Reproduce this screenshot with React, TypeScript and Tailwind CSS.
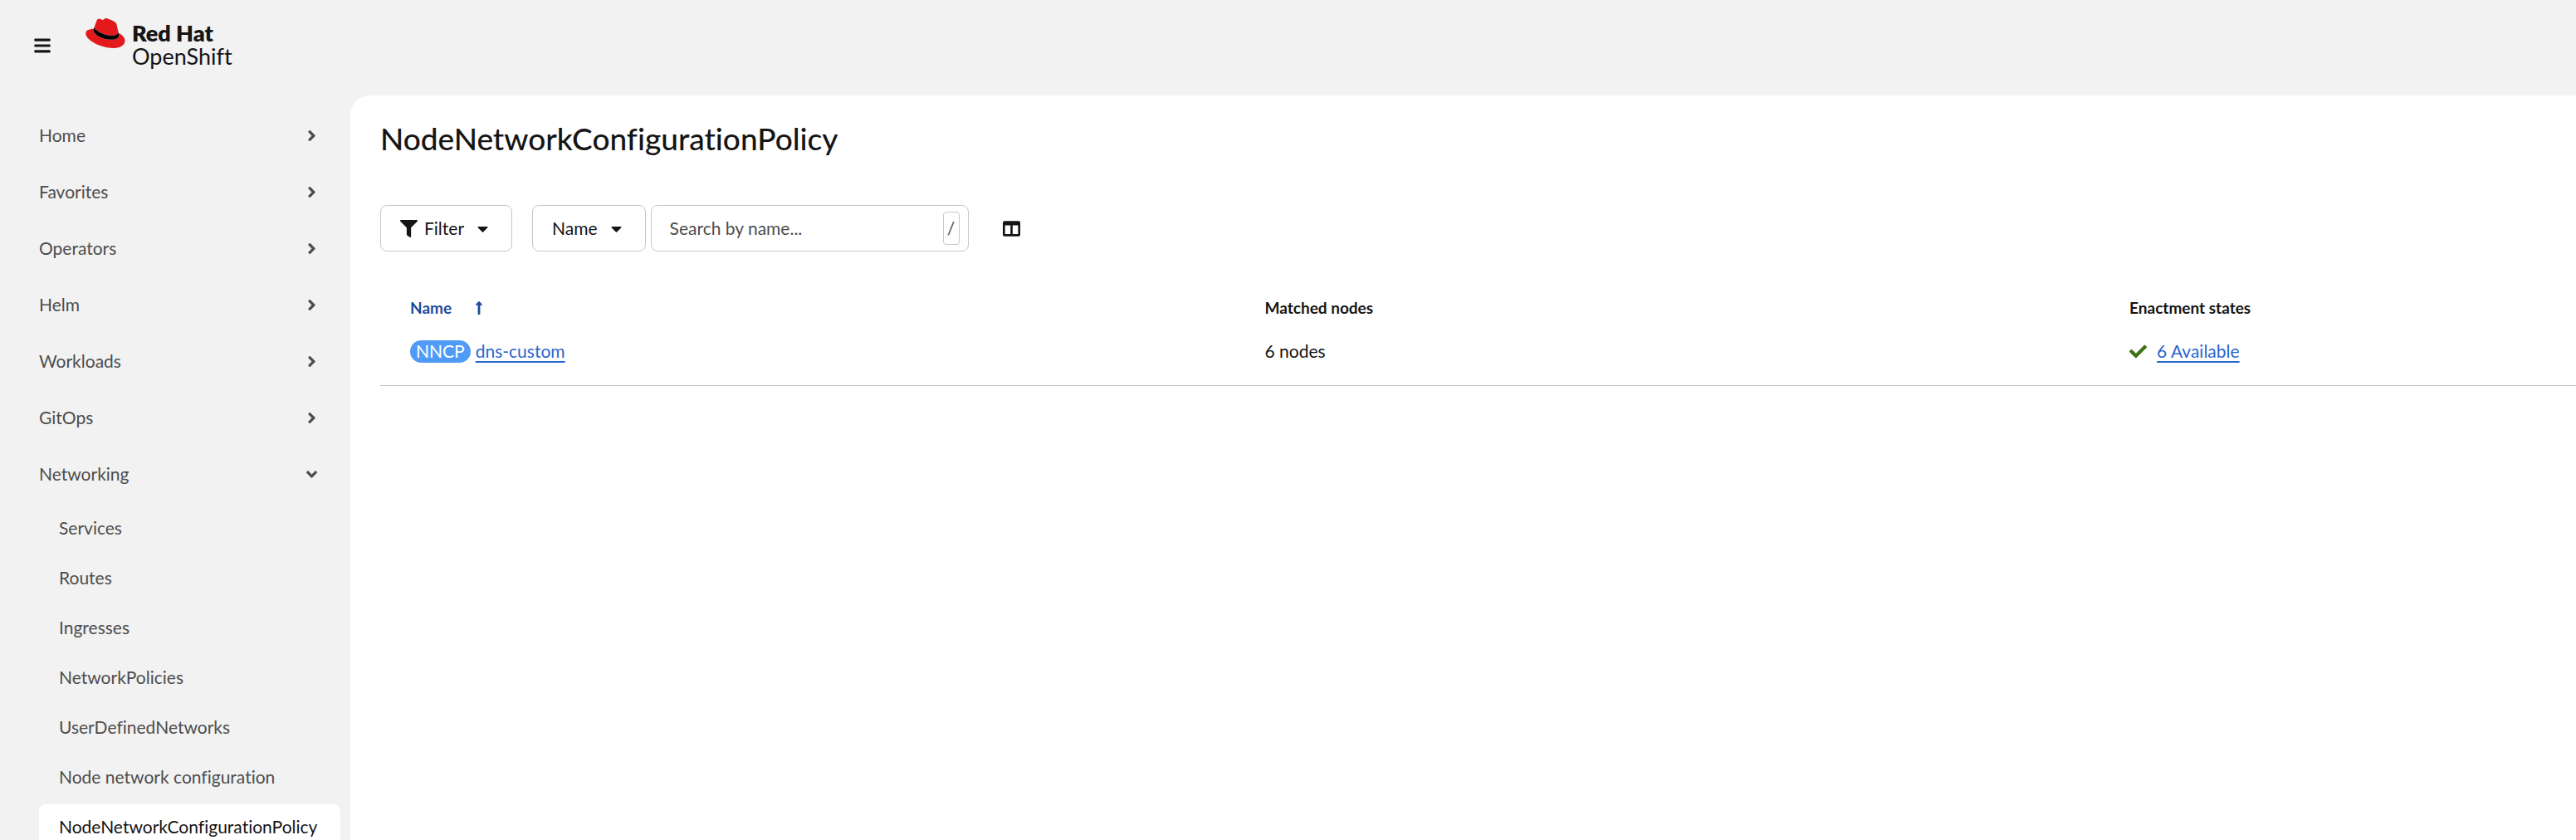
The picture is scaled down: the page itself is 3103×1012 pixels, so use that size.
import {
  FaAngleDown,
  FaAngleRight,
  FaBars,
  FaCaretDown,
  FaCheck,
  FaColumns,
  FaFilter,
  FaLongArrowAltUp,
} from "react-icons/fa";

const sections = ["Home", "Favorites", "Operators", "Helm", "Workloads", "GitOps"];

const networking = [
  "Services",
  "Routes",
  "Ingresses",
  "NetworkPolicies",
  "UserDefinedNetworks",
  "Node network configuration",
  "NodeNetworkConfigurationPolicy",
];

function HatLogo() {
  return (
    <svg viewBox="0 0 192 145" className="h-9 w-12" aria-hidden="true">
      <path
        fill="#e3191d"
        d="M127.47,83.49c12.51,0,30.61-2.58,30.61-17.46a14,14,0,0,0-.31-3.42l-7.45-32.36c-1.72-7.12-3.23-10.35-15.73-16.6C124.89,8.69,103.76.5,97.51.5,91.69.5,90,8,83.06,8c-6.68,0-11.64-5.6-17.89-5.6-6,0-9.91,4.09-12.93,12.5,0,0-8.41,23.72-9.49,27.16A6.43,6.43,0,0,0,42.53,44c0,9.22,36.3,39.45,84.94,39.45M160,72.07c1.73,8.19,1.73,9.05,1.73,10.13,0,14-15.74,21.77-36.43,21.77C78.54,104,37.58,76.6,37.58,58.49a18.45,18.45,0,0,1,1.51-7.33C22.27,52,.5,55,.5,74.22c0,31.48,74.59,70.28,133.65,70.28,45.28,0,56.7-20.48,56.7-36.65,0-12.72-11-27.16-30.83-35.78"
      />
      <path
        fill="#000"
        d="M160,72.07c1.73,8.19,1.73,9.05,1.73,10.13,0,14-15.74,21.77-36.43,21.77C78.54,104,37.58,76.6,37.58,58.49a18.45,18.45,0,0,1,1.51-7.33l3.66-9.06A6.43,6.43,0,0,0,42.53,44c0,9.22,36.3,39.45,84.94,39.45,12.51,0,30.61-2.58,30.61-17.46a14,14,0,0,0-.31-3.42Z"
      />
    </svg>
  );
}

function Masthead() {
  return (
    <header className="flex h-[115px] shrink-0 items-start">
      <button type="button" aria-label="Toggle navigation" className="mt-11 ml-10 flex text-[#151515]">
        <FaBars size={22} />
      </button>
      <a href="#home" className="mt-[22px] ml-[41px] flex text-[#151515]">
        <HatLogo />
        <span className="mt-1 ml-2 flex flex-col text-[27px] leading-7">
          <span className="font-extrabold">Red Hat</span>
          <span>OpenShift</span>
        </span>
      </a>
    </header>
  );
}

function Sidebar() {
  return (
    <nav aria-label="Main" className="w-[422px] shrink-0 overflow-hidden pt-[18px] pr-3 pl-[47px] text-[21px] text-[#4d4d4d]">
      <ul className="flex flex-col gap-2">
        {sections.map((label) => (
          <li key={label}>
            <button type="button" aria-expanded="false" className="flex h-[60px] w-full items-center justify-between pr-6">
              {label}
              <FaAngleRight size={21} />
            </button>
          </li>
        ))}
        <li>
          <button type="button" aria-expanded="true" className="flex h-[60px] w-full items-center justify-between pr-6">
            Networking
            <FaAngleDown size={21} />
          </button>
          <ul className="mt-2 flex flex-col gap-1.5">
            {networking.map((label) => {
              const current = label === "NodeNetworkConfigurationPolicy";
              return (
                <li key={label}>
                  <a
                    href={`#${label}`}
                    aria-current={current ? "page" : undefined}
                    className={
                      current
                        ? "flex h-[54px] items-center rounded-lg bg-white pl-6 text-[#151515]"
                        : "flex h-[54px] items-center pl-6"
                    }
                  >
                    {label}
                  </a>
                </li>
              );
            })}
          </ul>
        </li>
      </ul>
    </nav>
  );
}

function Toolbar() {
  return (
    <div className="flex items-center text-[21px]">
      <button type="button" className="flex h-14 items-center rounded-lg border border-[#c7c7c7] pr-6 pl-[23px]">
        <FaFilter size={21} />
        <span className="ml-2">Filter</span>
        <FaCaretDown size={21} className="ml-3" />
      </button>
      <button type="button" className="ml-6 flex h-14 items-center rounded-lg border border-[#c7c7c7] pr-6 pl-[23px]">
        Name
        <FaCaretDown size={21} className="ml-3" />
      </button>
      <div className="ml-1.5 flex h-14 w-[383px] items-center rounded-lg border border-[#c7c7c7] pr-2.5 pl-[22px]">
        <input
          type="text"
          aria-label="Search by name"
          placeholder="Search by name..."
          className="min-w-0 flex-1 bg-transparent outline-none placeholder:text-[#4d4d4d]"
        />
        <kbd className="flex h-10 w-5 items-center justify-center rounded-sm border border-[#c7c7c7] font-[Lato] text-[#4d4d4d]">
          /
        </kbd>
      </div>
      <button type="button" aria-label="Manage columns" className="ml-[41px] flex">
        <FaColumns size={21} />
      </button>
    </div>
  );
}

function PolicyTable() {
  return (
    <table className="mt-[38px] w-full table-fixed border-collapse text-left">
      <thead className="text-[19px] leading-6">
        <tr>
          <th scope="col" aria-sort="ascending" className="h-[60px] w-[39%] pl-9 font-bold text-[#1f4b99]">
            <button type="button" className="flex items-center gap-6 font-bold">
              Name
              <FaLongArrowAltUp size={18} />
            </button>
          </th>
          <th scope="col" className="w-[39%] pl-[34px] font-bold">
            Matched nodes
          </th>
          <th scope="col" className="pl-11 font-bold">
            Enactment states
          </th>
        </tr>
      </thead>
      <tbody className="text-[21px] leading-7">
        <tr className="border-b border-[#c7c7c7] align-top">
          <td className="h-[63px] pt-2 pl-9">
            <div className="flex items-center gap-1.5">
              <span className="flex h-[27px] items-center rounded-full bg-[#4f9bf5] px-[7px] text-white">NNCP</span>
              <a href="#dns-custom" className="text-[#2b66cf] underline decoration-2 underline-offset-4">
                dns-custom
              </a>
            </div>
          </td>
          <td className="pt-2 pl-[34px]">6 nodes</td>
          <td className="pt-2 pl-11">
            <div className="flex items-center gap-3">
              <FaCheck size={21} className="text-[#3d7317]" />
              <a href="#enactments" className="text-[#2b66cf] underline decoration-2 underline-offset-4">
                6 Available
              </a>
            </div>
          </td>
        </tr>
      </tbody>
    </table>
  );
}

export default function App() {
  return (
    <div className="flex h-screen flex-col overflow-hidden bg-[#f2f2f2] font-[Lato,sans-serif] text-[#151515] [font-variant-ligatures:none]">
      <Masthead />
      <div className="flex min-h-0 flex-1">
        <Sidebar />
        <main className="min-w-0 flex-1 rounded-tl-3xl bg-white pt-7 pl-9">
          <h1 className="mb-14 text-[37px] leading-12 font-medium">NodeNetworkConfigurationPolicy</h1>
          <Toolbar />
          <PolicyTable />
        </main>
      </div>
    </div>
  );
}
